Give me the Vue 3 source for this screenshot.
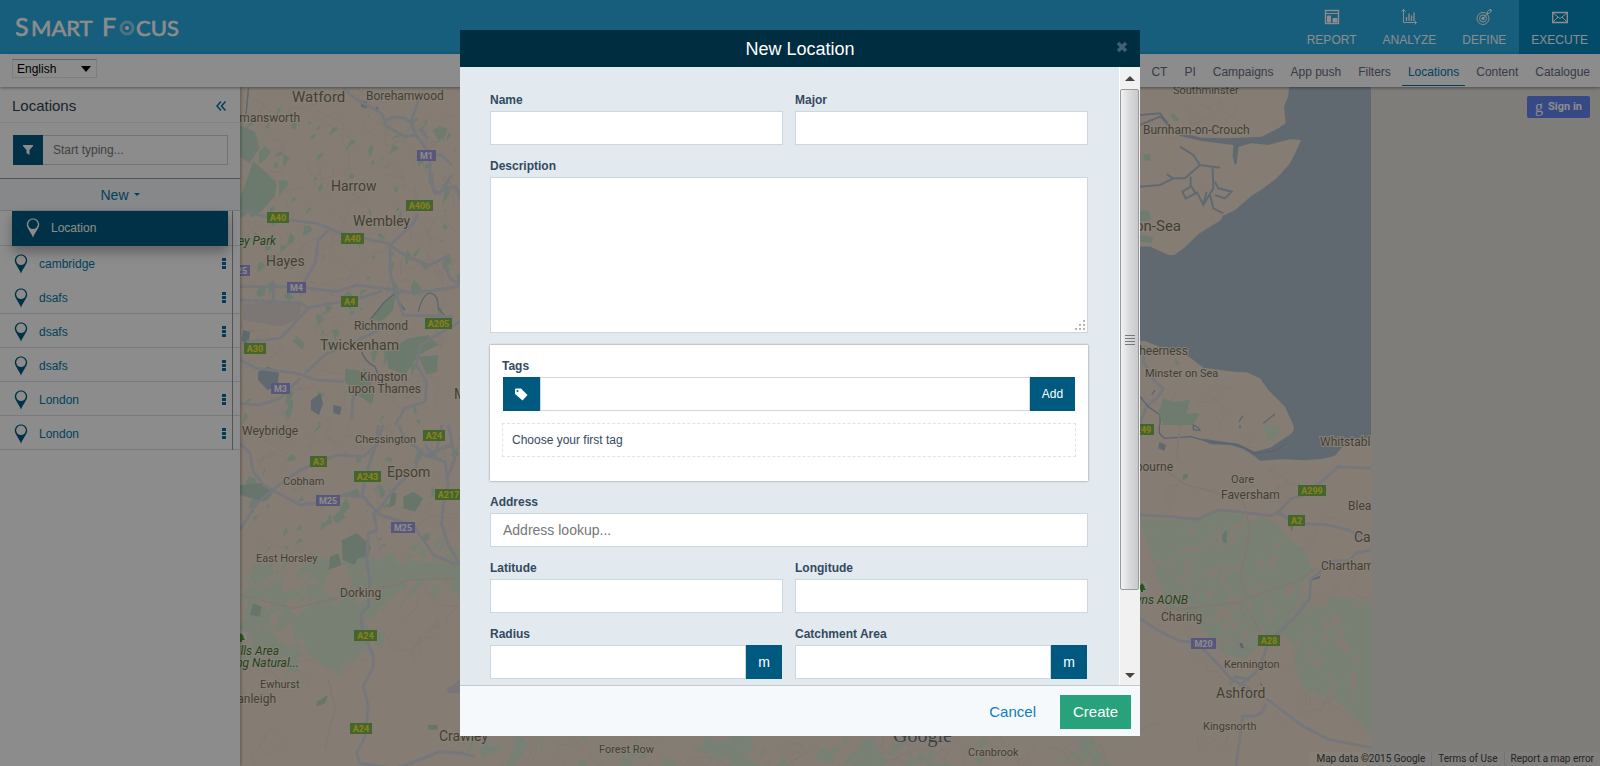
<script setup>
import { ref } from 'vue'

const tabs = ['CT', 'PI', 'Campaigns', 'App push', 'Filters', 'Locations', 'Content', 'Catalogue']
const rows = ['cambridge', 'dsafs', 'dsafs', 'dsafs', 'London', 'London']
const language = ref('English')

const labels = [
  ['Watford', 292, 102, 15], ['Borehamwood', 366, 100, 12], ['Harrow', 331, 191, 14],
  ['Wembley', 353, 226, 14], ['Hayes', 266, 266, 14], ['Richmond', 354, 330, 12],
  ['Twickenham', 320, 350, 14], ['Kingston', 360, 381, 12], ['upon Thames', 348, 393, 12],
  ['Mitcham', 454, 399, 14], ['Weybridge', 242, 435, 12], ['Chessington', 355, 443, 11],
  ['Epsom', 387, 477, 14], ['Cobham', 283, 485, 11], ['East Horsley', 256, 562, 11],
  ['Dorking', 340, 597, 12], ['Ewhurst', 260, 688, 11], ['Crawley', 439, 741, 14],
  ['Forest Row', 599, 753, 11], ['Cranbrook', 968, 756, 11],
  ['Southminster', 1173, 94, 11], ['Burnham-on-Crouch', 1143, 134, 12],
  ['Minster on Sea', 1145, 377, 11], ['Whitstable', 1320, 446, 12], ['Oare', 1231, 483, 11],
  ['Faversham', 1221, 499, 12], ['Blean', 1348, 510, 12], ['Canterbury', 1354, 542, 14],
  ['Chartham', 1321, 570, 12], ['Charing', 1161, 621, 12], ['Kennington', 1224, 668, 11],
  ['Ashford', 1216, 698, 14], ['Kingsnorth', 1203, 730, 11]
]
const endLabels = [
  ['Rickmansworth', 300, 122, 12], ['Cranleigh', 276, 703, 12], ['Southend-on-Sea', 1181, 231, 15],
  ['Sheerness', 1188, 355, 12], ['Sittingbourne', 1173, 471, 12]
]
const parks = [
  ['Colne Valley Park', 276, 245], ['Surrey Hills Area', 279, 655],
  ['of Outstanding Natural...', 299, 667], ['Kent Downs AONB', 1188, 604]
]
const shields = [
  ['M1', 417, 150, 19], ['A406', 406, 200, 27], ['A40', 267, 212, 22], ['A40', 341, 233, 23],
  ['M25', 226, 265, 24], ['M4', 287, 282, 19], ['A4', 341, 296, 17], ['A205', 425, 318, 27],
  ['A30', 244, 343, 22], ['M3', 271, 383, 19], ['A24', 423, 430, 22], ['A3', 310, 456, 17],
  ['A243', 354, 471, 27], ['A217', 435, 489, 27], ['M25', 316, 495, 24], ['M25', 391, 522, 24],
  ['A24', 354, 630, 23], ['A24', 350, 723, 22], ['A249', 1127, 424, 27], ['A299', 1298, 485, 28],
  ['A2', 1288, 515, 17], ['M20', 1191, 638, 25], ['A28', 1258, 635, 22]
]

let seed = 11
const rnd = () => (seed = (seed * 16807) % 2147483647) / 2147483647
const patches = (n, x, y, w, h, size) => {
  let d = ''
  for (let i = 0; i < n; i++) {
    const s = size * (0.3 + rnd())
    const cx = x + rnd() * w
    const cy = y + rnd() * h
    const p = () => (rnd() * s).toFixed(1)
    d += `M${cx.toFixed(1)} ${cy.toFixed(1)}l${p()} -${p()} ${p()} ${p()} -${p()} ${p()} -${p()} ${p()}z`
  }
  return d
}
const streets = (n, x, y, w, h) => {
  let d = ''
  for (let i = 0; i < n; i++) {
    d += `M${(x + rnd() * w).toFixed(1)} ${(y + rnd() * h).toFixed(1)}`
    for (let j = 0; j < 3; j++) d += `q${(rnd() * 24 - 12).toFixed(1)} ${(rnd() * 24 - 12).toFixed(1)} ${(rnd() * 44 - 22).toFixed(1)} ${(rnd() * 44 - 22).toFixed(1)}`
  }
  return d
}
const parkPatches = patches(150, 240, 90, 220, 350, 7) + patches(45, 240, 440, 220, 110, 8)
const woodPatches = patches(110, 240, 560, 130, 95, 16) + patches(40, 370, 540, 90, 50, 12)
const southPatches = patches(70, 470, 738, 640, 28, 14)
const landFlecks = patches(100, 1145, 525, 130, 90, 6) + patches(70, 1285, 580, 70, 120, 7) + patches(40, 1170, 590, 90, 55, 6)
const streetLines = streets(90, 240, 90, 220, 380)
const laneLines = streets(26, 240, 460, 220, 300) + streets(22, 1140, 450, 220, 310) + streets(40, 470, 738, 640, 28) + streets(3, 1140, 95, 80, 20) + streets(4, 1150, 385, 90, 30)
</script>

<template>
  <div class="page">
    <header class="topbar">
      <a class="logo" href="#" aria-label="Smart Focus">
        <svg width="170" height="34" viewBox="0 0 170 34">
          <g fill="#fff" stroke="#fff" stroke-width=".6" font-family="Lato, sans-serif">
            <text x="-1" y="26" font-size="25">S</text>
            <text x="15" y="26" font-size="22">MART</text>
            <text x="86" y="26" font-size="25">F</text>
            <text x="120" y="26" font-size="22">CUS</text>
          </g>
          <circle cx="111" cy="18" r="6" fill="none" stroke="#8fd0ec" stroke-width="3" />
          <circle cx="111" cy="18" r="2" fill="#fff" />
        </svg>
      </a>
      <nav class="main-nav" aria-label="Main">
        <a href="#">
          <svg width="16" height="16" viewBox="0 0 16 16" fill="none" stroke="#fff"><path d="M1.500 1.500h13v13h-13z" stroke-width="1.400" /><path d="M1 4.500h14" /><path d="M3.500 7h3v6h-3zM9 9.500h4V13H9z" fill="#fff" /></svg>
          REPORT
        </a>
        <a href="#">
          <svg width="16" height="16" viewBox="0 0 16 16" fill="none" stroke="#fff"><path d="M2.500 0v13.500H16M.500 2.500l2-2 2 2M13.500 11.500l2 2-2 2" /><path d="M5.500 12V8M8 12V4.500M10.500 12V6.500M13 12V3.500" stroke-width="1.300" /></svg>
          ANALYZE
        </a>
        <a href="#">
          <svg width="16" height="16" viewBox="0 0 16 16" fill="none" stroke="#fff"><circle cx="7" cy="9.500" r="6" /><circle cx="7" cy="9.500" r="3.500" /><circle cx="7" cy="9.500" r="1.200" fill="#fff" /><path d="M7 9.500l4.500-5M11 5l.5-2.500L14.500 0l-.2 1.500 1.500-.2L13.500 4z" /></svg>
          DEFINE
        </a>
        <a href="#" class="active">
          <svg width="16" height="16" viewBox="0 0 16 16" fill="none" stroke="#fff"><path d="M.700 3.500h14.600v10H.700z" stroke-width="1.400" /><path d="M1 4l7 5.500L15 4M1 13l5-5M15 13l-5-5" /></svg>
          EXECUTE
        </a>
      </nav>
    </header>

    <div class="subbar">
      <div class="lang">
        <select v-model="language" aria-label="Language"><option>English</option></select>
        <svg width="10" height="6" viewBox="0 0 10 6"><path d="M0 0h10L5 6z" /></svg>
      </div>
      <nav class="tabs" aria-label="Section">
        <a v-for="t in tabs" :key="t" href="#" :class="{ current: t === 'Locations' }">{{ t }}</a>
      </nav>
    </div>

    <div class="main">
      <aside class="sidebar">
        <div class="side-head">
          <h2>Locations</h2>
          <button type="button" aria-label="Collapse">
            <svg width="10" height="10" viewBox="0 0 10 10" fill="none" stroke="#00719f" stroke-width="1.500"><path d="M5 .500L1 5l4 4.500M9.500.500L5.500 5l4 4.500" /></svg>
          </button>
        </div>
        <div class="filter">
          <button type="button" aria-label="Filter">
            <svg width="10" height="10" viewBox="0 0 10 10"><path d="M0 0h10v1L6.500 5v5l-3-2V5L0 1z" fill="#fff" /></svg>
          </button>
          <input type="text" placeholder="Start typing..." aria-label="Filter locations" />
        </div>
        <button type="button" class="new">New <svg width="6" height="3" viewBox="0 0 6 3"><path d="M0 0h6L3 3z" fill="#0078a8" /></svg></button>
        <div class="list-wrap">
          <a class="menu-item" href="#">
            <svg width="14" height="20" viewBox="0 0 14 20"><path d="M7 .500C3.500.500.800 3.200.800 6.500.800 10 4.500 13.500 7 19.500 9.500 13.500 13.200 10 13.200 6.500 13.200 3.200 10.500.500 7 .500z" fill="#fff" /><circle cx="7" cy="6.300" r="4.800" fill="#005a80" /></svg>
            Location
          </a>
          <ul class="list">
            <li class="spacer"></li>
            <li v-for="(r, i) in rows" :key="i">
              <a href="#">
                <svg width="14" height="20" viewBox="0 0 14 20"><path d="M7 .500C3.500.500.800 3.200.800 6.500.800 10 4.500 13.500 7 19.500 9.500 13.500 13.200 10 13.200 6.500 13.200 3.200 10.500.500 7 .500z" fill="#005a80" /><circle cx="7" cy="6.300" r="4.800" fill="#fff" /></svg>
                {{ r }}
              </a>
              <button type="button" :aria-label="'Options for ' + r">
                <svg width="4" height="12" viewBox="0 0 4 12"><path d="M0 0h4v3H0zM0 4h4v3H0zM0 8h4v3H0z" fill="#00719f" /></svg>
              </button>
            </li>
          </ul>
        </div>
      </aside>

      <section class="map" aria-label="Map">
        <svg class="tiles" width="1131" height="679" viewBox="240 87 1131 679">
          <rect x="240" y="87" width="1131" height="679" fill="#f3e4d3" />
          <path :d="laneLines" class="street" />
          <path :d="streetLines" class="street" />
          <path :d="woodPatches" fill="#dbe8d2" />
          <path :d="southPatches" fill="#dbe8d2" />
          <path :d="parkPatches" fill="#c9e2cb" />

          <g transform="translate(235 85) scale(.333333)">
            <path d="M15 120l45 20 14 50-30 45-29-20zM55 228l70 65-5 40-40 45-30 20-35-60zM15 340l50 30-50 30zM440 660l40-30-5 45-30 30-40 5zM520 760l60-10 30 30-60 30-40 60-50-20-5-50zM330 850l60 10 30 60-10 40-40-30-40-40zM550 815l60-5-5 50-30 10z" fill="#c5dfc9" />
            <path d="M25 655l175-5-5 50-60 25-110-20z" fill="#e2d9d6" />
            <path d="M70 860l30-15 32 20-5 40-30 10-28-30zM228 945l28-20 8 30-12 35-25-15zM295 960l25 5-5 25-20-5zM378 45l18 5v20l-18-5zM420 65l12 3-5 10zM25 735l20 5-5 45-20-20z" fill="#b0bfcd" />
            <path d="M405 705l40-50 35-30M480 630q10 20 30 45M550 680q15-60 40-55 20 5 20 45l30 35M380 800q10 30 40 45l10 25M30 110q8-60 10-100" class="river" />
            <path d="M325 10l35 30 80 45 15 40 55 30 30-5-10-45 20-60 5-25M455 105q35-20 70 5l20 45 40 50 0 80 15 40 60-20 35 50M555 130l25 30M650 240l-30-30-35-5M650 270l-35 55-20-10-5-50M15 375l100 25 130 15 60 25 150 35 70 45 60 20 60-30M280 435l-30 30-10 70-35 60M465 480l0 80 15 55M465 480l70-65 15-30M15 605l170 0 120 15 60-20 115 15 60 10 120-20 20-5M15 645l170 8 35 15 160-30 60-20M35 770l100-10 30-30 55-60M190 650l30 20M480 620l25 70 150 5M15 825l50 25 120 15 60 20 80 5M210 865l60-55 90-40 100-50M15 955l60 5 60-20 60-60M350 1000l5-70M480 1020l30-50 60-20 5-60-30-50 10-60 120-70M115 590v60M625 530l20 50 30 20" class="road" />
          </g>

          <g transform="translate(235 425) scale(.333333)">
            <path d="M15 180l60-5 40 25-30 30-70-20zM320 345l45-20 25 20 18 20-10 30-30 5-10 20-35-15zM285 395l25-10 10 35-40 15zM505 215l30-15 30 20-25 40-35-10zM470 200l15 5-5 35-20 10zM55 535l25 10-5 30-30-5zM580 900h28v14h-28zM245 830l35-20-10 25-25 10z" fill="#bdd6c3" />
            <path d="M400 400l70 15 100 0 105 0v30l-90 20-60 0-70 30-60 0zM250 540l110 0 25 20-10 40 15 50-50 70-60 10-60-40-20-60z" fill="#dbe8d2" />
            <path d="M15 55l30 30 10 55 30 40 110 60 70-10 60-20 60 5 30 35 20 20 100 30 60 90 60 25 40-2M15 315l50-80 60-50 70-50 110-45 80 5 40-35 20-60M380 215l20-90 25-75 5-50M420 270l50-70 70-70 20-60M415 260l10 55-25 10-5 80 10 70-5 70-22 20 2 40 35 90 0 30-30 60 15 60-10 90-25 50 10 30 100 15 40-10 100-40 70 5 35 10M650 60l-80 30-60-50-20-40M570 90l60 20 10 70-15 60-5 60 20 60 30 50M570 60l30 40 20-100M640 0l20 100-20 50" class="road" />
            <path d="M15 510l160 40 150-35 210-50 120-5M280 760l20 90-30 120" class="minor" />
            <path d="M635 790l25-15 15-15v45h-35z" fill="#dcd8de" />
          </g>

          <g transform="translate(1130 85) scale(.333333)">
            <path d="M478 0L474 35 462 65 467 115 445 130 395 155 290 160 215 158 160 145 130 130 100 95 85 92 120 130 150 153 215 168 310 180 308 215 314 240 320 235 326 185 365 175 415 180 480 163 513 165 500 195 480 235 440 280 400 310 365 332 315 375 290 387 278 392 273 405 205 447 165 487 133 510 115 510 62 485 0 483V770L45 768 100 790 170 810 220 848 310 860 350 862 390 880 415 915 465 965 490 1020 493 1050H723V0z" fill="#b0bfcd" />
            <path d="M30 90l60-5 25 35 20 15M30 120l60-25M30 305l60-5 40-20 35 0 45-40 60 8M110 268l20 12M210 240l-20-30-40-25M248 250l2 60-30 50M182 275l0 30-25 15 10 20 30-15-12-20M200 320l20 40 10-40M240 330l10 40 30 15M255 290l10 20 40 10-20 20-30-10" class="creek" />
            <path d="M45 780l-5 50 35 60 25 20-20 30-30 25-20 50" class="road" />
            <path d="M30 935l25 30 35 25 0 30M327 1010l12-18M400 1015l35-28M65 930l10-15" class="river" />
            <path d="M120 90l10-5 20 20-15 5zM40 207h22v20h-22zM30 380l25-5 10 30-35 5zM30 450l40 5-5 20-35-5zM100 940l30 10 50-5-10 40 40 0-20 35H100l-15-40zM132 820l18 10-8 15z" fill="#c9e2cb" />
          </g>

          <g transform="translate(1130 425) scale(.333333)">
            <path d="M490 0H723V38L665 42 635 68 615 92 575 102 520 106 460 103 390 107 372 92 340 72 300 60 240 58 215 40 250 46 320 56 375 80 420 68 455 45 482 28 497 8z" fill="#b0bfcd" />
            <path d="M88 0l0 25 15 15 80-5 50 15 90 8 55 28 60-10 30-20M190 0l15 8 5 8-20-2zM330 0v10" class="river" />
            <path d="M88 50l20 10-5 18-18-8z" fill="#b0bfcd" />
            <path d="M30 285l90 0 80-5 70-20 75 10-10 30 60-25 40 15 30 40 60 50 25 60-40 40 0 40 80-10 130 20 55 20V945l-60-25-50-50-50-50-80-20-40-60 0-70-30-40-60 20-60 50-60-10-50-60-60-60-65-20z" fill="#dbe8d2" />
            <path d="M400 0h55l-15 40-30 10z" fill="#dbe8d2" />
          </g>
          <path :d="landFlecks" fill="#f0e2d0" />
          <g transform="translate(1130 425) scale(.333333)">
            <path d="M30 270l100 5 70 8 65-28 60 5 100 12 20-12 40-40 40-10 50-40 50-45 100 5M440 260l60 35 95 5 60 15 70 35M723 375l-45 10-20 22-60 0-30 35-25 20-5 60-40 50-50 50-30 20-20 60-20 40-50 40M30 580l60 40 60 28 50 5 60 60 40 45 50 30 70 40 90 70 85 45 138 27M408 835l-10 25-20 12-40 2-20 150M300 780l15-25 45 10" class="road" />
            <path d="M150 0l-10 100M30 120l80 20 60 40 80 20 90 30 20 80-10 60-20 80 20 70 150-50 60-40M350 550l40 70M100 555l80-5 160-20" class="minor" />
            <path d="M160 150l14-5-3 15-13 5zM275 330l15-15v40l-12-5zM470 280l15 40 10-25z" fill="#bdd6c3" />
            <path d="M548 462l20-8 5-4-5 10-20 5zM328 655l8 0 6 15-8 0zM392 770l8 20-8-10z" fill="#9dafc8" />
          </g>

          <g v-for="(s, i) in shields" :key="'s' + i">
            <rect :x="s[1]" :y="s[2]" :width="s[3]" height="11" :fill="s[0][0] === 'M' ? '#a19fe0' : '#7dbb52'" />
            <text :x="s[1] + s[3] / 2" :y="s[2] + 9" class="shield" :fill="s[0][0] === 'M' ? '#fff' : '#fbe83a'">{{ s[0] }}</text>
          </g>
          <g v-for="(t, i) in [[241, 637], [1142, 587]]" :key="'t' + i" :transform="`translate(${t[0]} ${t[1]})`">
            <circle r="6" fill="#eef0e6" />
            <path d="M0-4l3 4H2l2 3H1v2h-2V3h-3l2-3h-1z" fill="#4f9a35" />
          </g>
          <g class="place">
            <text v-for="(l, i) in labels" :key="i" :x="l[1]" :y="l[2]" :font-size="l[3]">{{ l[0] }}</text>
            <text v-for="(l, i) in endLabels" :key="'e' + i" :x="l[1]" :y="l[2]" :font-size="l[3]" text-anchor="end">{{ l[0] }}</text>
          </g>
          <g class="place park">
            <text v-for="(l, i) in parks" :key="i" :x="l[1]" :y="l[2]" font-size="12" text-anchor="end">{{ l[0] }}</text>
          </g>
          <text x="893" y="742" class="brand">Google</text>
        </svg>
        <button type="button" class="signin"><span>g</span>Sign in</button>
        <div class="credits">
          <span>Map data ©2015 Google</span>
          <a href="#">Terms of Use</a>
          <a href="#">Report a map error</a>
        </div>
      </section>
    </div>

    <div class="backdrop">
      <div class="dialog" role="dialog" aria-modal="true" aria-labelledby="dlg-title">
        <div class="dlg-head">
          <h1 id="dlg-title">New Location</h1>
          <button type="button" aria-label="Close">
            <svg width="12" height="12" viewBox="0 0 12 12"><path d="M2 2l8 8M10 2l-8 8" stroke="#3f6172" stroke-width="3.500" /></svg>
          </button>
        </div>
        <div class="dlg-body">
          <form class="form" @submit.prevent>
            <div class="pair">
              <div class="field"><label for="name">Name</label><input id="name" type="text" /></div>
              <div class="field"><label for="major">Major</label><input id="major" type="text" /></div>
            </div>
            <div class="field desc">
              <label for="desc">Description</label>
              <textarea id="desc"></textarea>
              <svg class="grip" width="10" height="10" viewBox="0 0 10 10"><path d="M8 0h2v2H8zM8 4h2v2H8zM4 4h2v2H4zM8 8h2v2H8zM4 8h2v2H4zM0 8h2v2H0z" fill="#b5b5b5" /></svg>
            </div>
            <div class="card">
              <div class="field">
                <label for="tag">Tags</label>
                <div class="group tag-group">
                  <span class="addon tag-icon"><svg width="13" height="13" viewBox="0 0 13 13"><path d="M0 1.500Q0 .500 1 .500h5L12.500 7 7.500 12.500 0 6z" fill="#fff" /><circle cx="2.500" cy="3" r="1" fill="#005a80" /></svg></span>
                  <input id="tag" type="text" />
                  <button type="button" class="addon add">Add</button>
                </div>
              </div>
              <p class="empty">Choose your first tag</p>
            </div>
            <div class="field"><label for="addr">Address</label><input id="addr" type="text" placeholder="Address lookup..." /></div>
            <div class="pair">
              <div class="field"><label for="lat">Latitude</label><input id="lat" type="text" /></div>
              <div class="field"><label for="lng">Longitude</label><input id="lng" type="text" /></div>
            </div>
            <div class="pair">
              <div class="field"><label for="rad">Radius</label><div class="group unit"><input id="rad" type="text" /><span class="addon">m</span></div></div>
              <div class="field"><label for="area">Catchment Area</label><div class="group unit"><input id="area" type="text" /><span class="addon">m</span></div></div>
            </div>
          </form>
          <div class="scroll" aria-hidden="true">
            <svg width="10" height="5" viewBox="0 0 10 5"><path d="M0 5l5-5 5 5z" fill="#444" /></svg>
            <div class="track"><div class="thumb"><i></i><i></i><i></i><i></i></div></div>
            <svg width="10" height="5" viewBox="0 0 10 5"><path d="M0 0l5 5 5-5z" fill="#444" /></svg>
          </div>
        </div>
        <div class="dlg-foot">
          <button type="button" class="cancel">Cancel</button>
          <button type="button" class="create">Create</button>
        </div>
      </div>
    </div>
  </div>
</template>

<style>
body { background: #fff; }
</style>

<style scoped>
* { box-sizing: border-box; }
.page { display: flex; flex-direction: column; height: 100vh; overflow: hidden; font: 12px/18px "Liberation Sans", Arial, sans-serif; color: #34495e; }
button, input, textarea, select { font: inherit; margin: 0; border-radius: 0; }
button { border: 0; padding: 0; background: none; cursor: pointer; }
a { text-decoration: none; color: inherit; }
svg { display: block; flex: none; }
h1, h2, p, ul { margin: 0; padding: 0; font-weight: normal; }

.topbar { display: flex; justify-content: space-between; height: 54px; flex: none; background: #28abe2; }
.logo { padding: 10px 0 0 16px; }
.main-nav { display: flex; }
.main-nav a { display: flex; flex-direction: column; align-items: center; gap: 7px; padding: 9px 13px 0; color: #fff; line-height: 16px; }
.main-nav .active { padding: 9px 12px 0; background: #078ac0; }

.subbar { display: flex; justify-content: space-between; height: 33px; flex: none; background: #fff; box-shadow: 0 1px 3px rgba(0, 0, 0, .4); position: relative; z-index: 2; }
.lang { position: relative; width: 85px; height: 19px; margin: 5px 0 0 12px; }
.lang select { appearance: none; width: 100%; height: 100%; padding: 0 4px; border: 1px solid #e6e6e6; border-top: 1px solid #b5b5b5; background: #fff; color: #000; line-height: 16px; }
.lang svg { position: absolute; right: 6px; top: 7px; pointer-events: none; }
.tabs { display: flex; gap: 5px; padding: 0 4px; }
.tabs a { padding: 9px 6px 4px; height: 32px; color: #666c85; }
.tabs .current { color: #0078a8; border-bottom: 1px solid #0078a8; }

.main { display: flex; flex: 1; min-height: 0; }
.sidebar { width: 240px; flex: none; background: #fff; box-shadow: 1px 0 3px rgba(0, 0, 0, .3); position: relative; z-index: 1; }
.side-head { display: flex; justify-content: space-between; align-items: center; height: 36px; padding: 2px 14px 0 12px; border-bottom: 1px solid #eceef0; }
.side-head h2 { font-size: 15px; color: #2f4350; }
.filter { display: flex; height: 30px; margin: 12px 12px 13px 13px; }
.filter button { display: flex; align-items: center; justify-content: center; width: 30px; background: #005a80; }
.filter input { flex: 1; min-width: 0; border: 1px solid #c8d4dc; border-left: 0; padding: 0 10px; background: #fff; }
.filter input::placeholder { color: #777; opacity: 1; }
.new { display: flex; align-items: center; justify-content: center; gap: 5px; width: 100%; height: 33px; background: #f4f8fc; border-top: 1px solid #999; border-bottom: 1px solid #d5dce2; color: #0078a8; font-size: 14px; }
.list-wrap { position: relative; }
.menu-item { position: absolute; z-index: 1; left: 12px; right: 12px; top: 0; height: 35px; display: flex; align-items: center; gap: 11px; padding: 0 14px 2px; background: #005a80; color: #fff; box-shadow: 0 6px 12px rgba(0, 0, 0, .3); }
.list { list-style: none; position: relative; }
.list::after { content: ""; position: absolute; right: 7px; top: 0; bottom: 0; width: 1px; background: #999; }
.list li { display: flex; justify-content: space-between; align-items: center; height: 34px; padding: 2px 14px 0; border-bottom: 1px solid #d5e0e8; color: #0078a8; }
.list .spacer { height: 35px; }
.list li:nth-child(2) { border-bottom-color: #fff; }
.list a { display: flex; align-items: center; gap: 11px; }

.map { position: relative; flex: 1; min-width: 0; overflow: hidden; background: #e5e3df; }
.tiles { font-family: Roboto, sans-serif; }
.street { fill: none; stroke: #eaddd2; stroke-width: 1; }
.road { fill: none; stroke: #d6d9df; stroke-width: 9; stroke-linejoin: round; }
.minor { fill: none; stroke: #ead9cb; stroke-width: 5; }
.river { fill: none; stroke: #a4b6cd; stroke-width: 4; }
.creek { fill: none; stroke: #b0bfcd; stroke-width: 6; }
.place text { fill: #7d7457; stroke: #f6ecdf; stroke-width: 2px; paint-order: stroke; }
.park text { fill: #3e7b30; font-style: italic; }
.shield { font-size: 9px; font-weight: 700; text-anchor: middle; }
.brand { font: 20px "Liberation Serif", serif; fill: #777; stroke: #eee; stroke-width: 1px; paint-order: stroke; }
.signin { position: absolute; right: 10px; top: 9px; display: flex; align-items: center; gap: 5px; height: 22px; padding: 0 8px; border-radius: 2px; background: #6485f0; color: #fff; font: bold 11px/22px Roboto, sans-serif; }
.signin span { font: 16px/16px "Liberation Serif", serif; }
.credits { position: absolute; right: 0; bottom: 0; display: flex; font: 10px/14px Roboto, sans-serif; color: #444; background: rgba(255, 255, 255, .2); }
.credits > * { padding: 0 6px; }
.credits a { border-left: 1px solid #d5d5d5; }

.backdrop { position: fixed; inset: 0; z-index: 10; padding: 30px 0; background: rgba(0, 0, 0, .45); display: flex; justify-content: center; }
.dialog { display: flex; flex-direction: column; width: 680px; max-width: 100%; background: #e2eaf0; }
.dlg-head { display: flex; align-items: center; justify-content: center; position: relative; flex: none; height: 37px; background: #002d40; color: #fff; }
.dlg-head h1 { font-size: 18px; line-height: 24px; }
.dlg-head button { position: absolute; right: 12px; top: 11px; }
.dlg-body { display: flex; flex: 1; min-height: 0; overflow: hidden; }
.form { flex: 1; padding: 24px 31px 0 30px; display: flex; flex-direction: column; gap: 12px; overflow: hidden; }
.form > * { flex: none; }
.pair { display: grid; grid-template-columns: 1fr 1fr; gap: 12px; }
.field { display: flex; flex-direction: column; position: relative; }
.field label { height: 20px; font-weight: bold; }
.field input, .field textarea { width: 100%; height: 34px; padding: 0 12px; border: 1px solid #ccd8e0; background: #fff; font-size: 14px; outline: 0; }
.field input::placeholder { color: #777; opacity: 1; }
.field textarea { height: 156px; resize: none; display: block; }
.grip { position: absolute; right: 3px; bottom: 3px; }
.card { padding: 12px 12px 24px; background: #fff; box-shadow: 0 0 2px rgba(0, 0, 0, .45); }
.group { display: flex; height: 34px; }
.group input { flex: 1; min-width: 0; }
.tag-group { margin: 0 1px; }
.unit { padding-right: 1px; }
.addon { display: flex; align-items: center; justify-content: center; flex: none; width: 36px; background: #005a80; color: #fff; font-size: 14px; }
.tag-icon { width: 37px; }
.add { width: 45px; font-size: 12px; }
.empty { margin-top: 12px; height: 34px; padding: 0 9px; border: 1px dashed #dde5ea; line-height: 32px; }
.scroll { display: flex; flex-direction: column; align-items: center; width: 21px; flex: none; padding: 9px 0 7px; background: #f1f1f1; border-left: 1px solid #fff; }
.track { flex: 1; align-self: stretch; padding: 8px 1px 83px 0; }
.thumb { display: flex; flex-direction: column; align-items: center; justify-content: center; gap: 2px; height: 100%; border: 1px solid #999; border-radius: 2px; background: linear-gradient(90deg, #f2f2f3, #d9dadc 50%, #c8c9cc); }
.thumb i { width: 10px; height: 1px; background: #777; }
.dlg-foot { display: flex; align-items: center; justify-content: flex-end; gap: 24px; flex: none; height: 51px; padding: 2px 9px 0 0; background: #f5f9fc; border-top: 1px solid #c4c9cd; font-size: 15px; }
.cancel { color: #0f7fb8; }
.create { height: 34px; padding: 0 13px; background: #27a27b; color: #fff; }
</style>
